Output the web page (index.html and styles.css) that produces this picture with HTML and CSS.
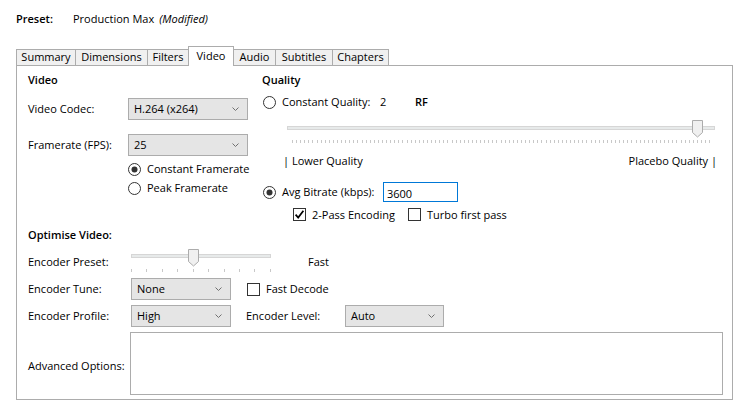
FILE: index.html
```html
<!DOCTYPE html>
<html>
<head>
<meta charset="utf-8">
<title>Video</title>
<link rel="stylesheet" href="styles.css">
</head>
<body>
<div class="preset">
  <span class="preset-label">Preset:</span>
  <span class="preset-name">Production Max</span>
  <span class="modified">(Modified)</span>
</div>
<div class="tabs">
  <div class="tab tab-summary">Summary</div>
  <div class="tab tab-dimensions">Dimensions</div>
  <div class="tab tab-filters">Filters</div>
  <div class="tab tab-video active">Video</div>
  <div class="tab tab-audio">Audio</div>
  <div class="tab tab-subtitles">Subtitles</div>
  <div class="tab tab-chapters">Chapters</div>
</div>
<div class="panel">
  <div class="top">
    <div class="col-left">
      <div class="heading">Video</div>
      <div class="row row-codec">
        <span class="lbl lbl-top">Video Codec:</span>
        <div class="select select-wide">H.264 (x264)<svg class="chev" width="7" height="4" viewBox="0 0 7 4"><path d="M0.5 0.5 L3.5 3.5 L6.5 0.5" fill="none" stroke="#707070" stroke-width="1"/></svg></div>
      </div>
      <div class="row row-fps">
        <span class="lbl lbl-top">Framerate (FPS):</span>
        <div class="select select-wide">25<svg class="chev" width="7" height="4" viewBox="0 0 7 4"><path d="M0.5 0.5 L3.5 3.5 L6.5 0.5" fill="none" stroke="#707070" stroke-width="1"/></svg></div>
      </div>
      <div class="opt opt-cfr">
        <svg class="radio" width="13" height="13" viewBox="0 0 13 13"><circle cx="6.5" cy="6.5" r="6" fill="#fff" stroke="#333"/><circle cx="6.5" cy="6.5" r="3" fill="#333"/></svg>
        <span>Constant Framerate</span>
      </div>
      <div class="opt opt-pfr">
        <svg class="radio" width="13" height="13" viewBox="0 0 13 13"><circle cx="6.5" cy="6.5" r="6" fill="#fff" stroke="#333"/></svg>
        <span>Peak Framerate</span>
      </div>
    </div>
    <div class="col-right">
      <div class="heading">Quality</div>
      <div class="opt opt-cq">
        <svg class="radio" width="13" height="13" viewBox="0 0 13 13"><circle cx="6.5" cy="6.5" r="6" fill="#fff" stroke="#333"/></svg>
        <span class="cq-label">Constant Quality:</span>
        <span class="cq-value">2</span>
        <span class="cq-unit">RF</span>
      </div>
      <div class="slider slider-quality">
        <div class="track"></div>
        <div class="ticks ticks-quality"></div>
        <svg class="thumb thumb-quality" width="11" height="18" viewBox="0 0 11 18"><path d="M0.5 0.5 H10.5 V12.5 L5.5 17 L0.5 12.5 Z" fill="#f0f0f0" stroke="#acacac"/></svg>
      </div>
      <div class="range-labels">
        <span>| Lower Quality</span>
        <span>Placebo Quality |</span>
      </div>
      <div class="opt opt-avg">
        <svg class="radio" width="13" height="13" viewBox="0 0 13 13"><circle cx="6.5" cy="6.5" r="6" fill="#fff" stroke="#333"/><circle cx="6.5" cy="6.5" r="3" fill="#333"/></svg>
        <span class="avg-label">Avg Bitrate (kbps):</span>
        <div class="input">3600</div>
      </div>
      <div class="checks">
        <div class="chk chk-2pass">
          <svg class="box" width="13" height="13" viewBox="0 0 13 13"><rect x="0.5" y="0.5" width="12" height="12" fill="#fff" stroke="#333"/><path d="M2.6 6.6 L5.2 9.6 L10.4 2.8" fill="none" stroke="#000" stroke-width="1.7"/></svg>
          <span>2-Pass Encoding</span>
        </div>
        <div class="chk">
          <svg class="box" width="13" height="13" viewBox="0 0 13 13"><rect x="0.5" y="0.5" width="12" height="12" fill="#fff" stroke="#333"/></svg>
          <span>Turbo first pass</span>
        </div>
      </div>
    </div>
  </div>
  <div class="bottom">
    <div class="heading heading-opt">Optimise Video:</div>
    <div class="row row-preset">
      <span class="lbl lbl-bottom lbl-preset">Encoder Preset:</span>
      <div class="slider slider-preset">
        <div class="track"></div>
        <div class="ticks ticks-preset"></div>
        <svg class="thumb thumb-preset" width="11" height="18" viewBox="0 0 11 18"><path d="M0.5 0.5 H10.5 V12.5 L5.5 17 L0.5 12.5 Z" fill="#f0f0f0" stroke="#acacac"/></svg>
      </div>
      <span class="preset-value">Fast</span>
    </div>
    <div class="row row-tune">
      <span class="lbl lbl-bottom">Encoder Tune:</span>
      <div class="select select-narrow">None<svg class="chev" width="7" height="4" viewBox="0 0 7 4"><path d="M0.5 0.5 L3.5 3.5 L6.5 0.5" fill="none" stroke="#707070" stroke-width="1"/></svg></div>
      <div class="chk chk-fast">
        <svg class="box" width="13" height="13" viewBox="0 0 13 13"><rect x="0.5" y="0.5" width="12" height="12" fill="#fff" stroke="#333"/></svg>
        <span>Fast Decode</span>
      </div>
    </div>
    <div class="row row-profile">
      <span class="lbl lbl-bottom">Encoder Profile:</span>
      <div class="select select-narrow">High<svg class="chev" width="7" height="4" viewBox="0 0 7 4"><path d="M0.5 0.5 L3.5 3.5 L6.5 0.5" fill="none" stroke="#707070" stroke-width="1"/></svg></div>
      <span class="lbl-level">Encoder Level:</span>
      <div class="select select-level">Auto<svg class="chev" width="7" height="4" viewBox="0 0 7 4"><path d="M0.5 0.5 L3.5 3.5 L6.5 0.5" fill="none" stroke="#707070" stroke-width="1"/></svg></div>
    </div>
    <div class="row row-advanced">
      <span class="lbl-adv">Advanced Options:</span>
      <div class="textarea"></div>
    </div>
  </div>
</div>
</body>
</html>
```

FILE: styles.css
```css
* { box-sizing: border-box; }
html, body { margin: 0; padding: 0; background: #fff; }
body {
  font-family: "Open Sans", "Noto Sans", "Liberation Sans", sans-serif;
  font-size: 11px;
  line-height: 16px;
  color: #000;
  width: 738px;
  height: 403px;
  overflow: hidden;
}

/* preset header */
.preset { display: flex; height: 27px; padding: 11px 0 0 16px; white-space: nowrap; }
.preset-label { width: 57px; font-weight: 600; }
.preset-name { margin-right: 5px; }
.modified { font-style: italic; }

/* tabs */
.tabs { display: flex; align-items: flex-end; height: 19px; margin: 19px 0 0 16px; }
.tab {
  height: 16px;
  line-height: 14px;
  border: 1px solid #acacac;
  border-bottom: none;
  background: #f0f0f0;
  text-align: center;
  margin-left: -1px;
  white-space: nowrap;
}
.tab:first-child { margin-left: 0; }
.tab.active {
  height: 20px;
  line-height: 18px;
  margin-bottom: -1px;
  background: #fff;
  position: relative;
  z-index: 1;
}
.tab-summary { width: 60px; }
.tab-dimensions { width: 73px; }
.tab-filters { width: 42px; }
.tab-video { width: 46px; }
.tab-audio { width: 43px; }
.tab-subtitles { width: 58px; }
.tab-chapters { width: 57px; }

/* panel */
.panel {
  margin-left: 16px;
  width: 717px;
  height: 335px;
  border: 1px solid #acacac;
  padding: 6px 0 0 11px;
}
.top { display: grid; grid-template-columns: 234px 1fr; height: 150px; }
.heading { height: 16px; font-weight: 600; white-space: nowrap; }

.row { display: flex; align-items: center; white-space: nowrap; }
.lbl-top { width: 100px; }
.lbl-bottom { width: 103px; }
.row-codec { margin-top: 10px; height: 22px; }
.row-fps { margin-top: 14px; height: 22px; }

.select {
  position: relative;
  height: 22px;
  line-height: 20px;
  border: 1px solid #acacac;
  background: #e5e5e5;
  padding-left: 5px;
  white-space: nowrap;
}
.select .chev { position: absolute; right: 8px; top: 8px; }
.select-wide { width: 120px; }
.select-narrow { width: 100px; }
.select-level { width: 99px; }

.opt { display: flex; align-items: center; height: 16px; white-space: nowrap; }
.opt .radio { flex: none; margin-right: 6px; }
.opt-cfr { margin: 5px 0 0 100px; }
.opt-pfr { margin: 3px 0 0 100px; }

.opt-cq { margin: 6px 0 0 1px; }
.cq-label { width: 98px; }
.cq-value { width: 35px; }
.cq-unit { font-weight: 600; }

.slider { position: relative; }
.slider .track {
  position: absolute;
  left: 0; right: 0;
  height: 4px;
  background: #e7eaea;
  border: 1px solid #d6d6d6;
}
.slider .ticks { position: absolute; height: 3px; }
.slider .thumb { position: absolute; }

.slider-quality { margin: 8px 0 0 25px; width: 428px; height: 28px; }
.slider-quality .track { top: 8px; }
.slider-quality .thumb { top: 2px; left: 405px; }
.ticks-quality {
  top: 22px; left: 5px; right: 5px;
  background: repeating-linear-gradient(to right, #c8c8c8 0 1px, transparent 1px 4.09px);
}

.range-labels {
  display: flex;
  justify-content: space-between;
  margin: 7px 0 0 21px;
  width: 434px;
  height: 16px;
  white-space: nowrap;
}

.opt-avg { margin: 13px 0 0 1px; height: 20px; }
.avg-label { width: 101px; }
.input {
  width: 75px;
  height: 20px;
  line-height: 20px;
  border: 1px solid #0078d7;
  padding: 1px 0 0 3px;
  background: #fff;
}

.checks { display: flex; margin: 5px 0 0 31px; height: 15px; }
.chk { display: flex; align-items: center; white-space: nowrap; }
.chk .box { flex: none; margin-right: 6px; }
.chk-2pass { width: 115px; }

/* bottom part */
.bottom { display: flex; flex-direction: column; }
.heading-opt { margin-top: 5px; }
.row-preset { margin-top: 5px; height: 26px; align-items: flex-start; }
.lbl-preset { margin-top: 6px; }
.slider-preset { width: 140px; height: 26px; }
.slider-preset .track { top: 6px; }
.slider-preset .thumb { top: 1px; left: 57px; }
.ticks-preset {
  top: 21px; left: 0; width: 141px;
  background: repeating-linear-gradient(to right, #c8c8c8 0 1px, transparent 1px 15.42px);
}
.preset-value { margin: 6px 0 0 37px; }

.row-tune { margin-top: 4px; height: 22px; }
.chk-fast { margin-left: 16px; }
.row-profile { margin-top: 5px; height: 22px; }
.lbl-level { width: 99px; margin-left: 15px; }

.row-advanced { margin-top: 5px; height: 63px; }
.lbl-adv { width: 102px; margin-top: 4px; }
.textarea { width: 593px; height: 63px; border: 1px solid #acacac; background: #fff; }
```
